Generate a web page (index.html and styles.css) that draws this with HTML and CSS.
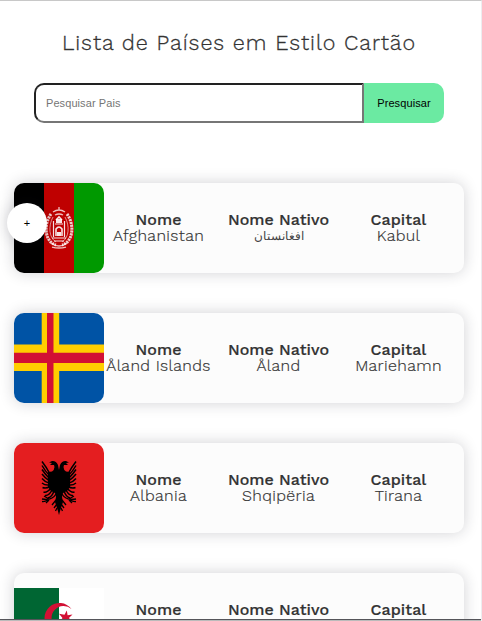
FILE: index.html
```html
<!DOCTYPE html>
<html lang="pt">
<head>
<meta charset="utf-8">
<title>Lista de Países</title>
<link rel="stylesheet" href="styles.css">
</head>
<body>
<h1 class="title">Lista de Países em Estilo Cartão</h1>
<form class="search">
  <input class="search-input" type="text" placeholder="Pesquisar Pais">
  <button class="search-button" type="button">Presquisar</button>
</form>
<main class="list">
  <article class="card">
    <svg class="flag" viewBox="0 0 90 90">
      <path d="M0 0h30v90H0z"/><path fill="#bf0000" d="M30 0h30v90H30z"/><path fill="#090" d="M60 0h30v90H60z"/>
      <g fill="none" stroke="#fff">
        <path d="M37 31C29 42 31 59 42 62M53 31C61 42 59 59 48 62" stroke-width="3" stroke-dasharray="2.200 .7" opacity=".8"/>
        <path d="M39 34C34 43 35 55 42 59M51 34C56 43 55 55 48 59" stroke-width=".8" opacity=".7"/>
        <path d="M39 29q6-4 12 0M41 32q4-2 8 0M45 24v3M37 60q8 6 16 0M38 64q7 2 14 0" stroke-width="1.300" opacity=".75"/>
        <path d="M39.500 38v16M50.500 38v16M41 41h8M38 55h14M40 58h10" stroke-width="1.200" opacity=".9"/>
        <path d="M42 53V46q3-4 6 0v7M42 37l3-3 3 3" stroke-width="1.600" opacity=".9"/>
      </g>
      <path fill="#fff" opacity=".9" d="M42 36h6v4h-6zM43 49h4v4h-4z"/>
    </svg>
    <div class="info">
      <div class="field"><strong>Nome</strong><span>Afghanistan</span></div>
      <div class="field"><strong>Nome Nativo</strong><span class="arabic" lang="fa">افغانستان</span></div>
      <div class="field"><strong>Capital</strong><span>Kabul</span></div>
    </div>
    <button class="more" type="button">+</button>
  </article>
  <article class="card">
    <svg class="flag" viewBox="0 0 90 90">
      <path fill="#0053a5" d="M0 0h90v90H0z"/>
      <path fill="#ffce00" d="M27.700 0h17.500v90H27.700zM0 31.500h90v26.500H0z"/>
      <path fill="#d21034" d="M33 0h6.500v90H33zM0 39.700h90v10.300H0z"/>
    </svg>
    <div class="info">
      <div class="field"><strong>Nome</strong><span>Åland Islands</span></div>
      <div class="field"><strong>Nome Nativo</strong><span>Åland</span></div>
      <div class="field"><strong>Capital</strong><span>Mariehamn</span></div>
    </div>
  </article>
  <article class="card">
    <svg class="flag" viewBox="0 0 90 90">
      <path fill="#e41e20" d="M0 0h90v90H0z"/>
      <g id="wing">
        <path d="M45.200 28L44 22Q42 17.500 38 18L35 19.500 38 20 36 22 40 22Q41.500 26 38 28.500L34 29V44L37 48 41 50 42 54 41 59 43 65 45.200 72z"/>
        <path fill="none" stroke="#000" stroke-width="1.500" d="M36 31Q33 25 28 18.500M36 33Q31 28 28 22.500M35 35Q31 31 28 26.500M35 37.500Q31 35 28 31M35 40Q31 39 28 35.500M35 42Q31 42.500 28 40M36 43.500Q32 46 28.500 44.500M37 45Q33 50 29.500 49M38 47Q35 53 31 52.500M40 48Q38 54 34 55"/>
        <path fill="none" stroke="#000" stroke-width="1.300" d="M42 51Q38 58 28 56M34 56.500Q31 59 28 58.500M35 56l-5-3M35 57l-3 3M42 57l-4 5M43 61l-3 4M43 65l-1.500 3"/>
      </g>
      <use href="#wing" transform="matrix(-1 0 0 1 90 0)"/>
    </svg>
    <div class="info">
      <div class="field"><strong>Nome</strong><span>Albania</span></div>
      <div class="field"><strong>Nome Nativo</strong><span>Shqipëria</span></div>
      <div class="field"><strong>Capital</strong><span>Tirana</span></div>
    </div>
  </article>
  <article class="card">
    <svg class="flag" viewBox="0 0 90 90">
      <path fill="#063" d="M0 15h45v60H0z"/><path fill="#fff" d="M45 15h45v60H45z"/>
      <path fill="#d21034" d="M57.500 36A15 15 0 1 0 57.500 54A12 12 0 1 1 57.500 36z"/>
      <path fill="#d21034" d="M52.800 37.500l.8 4.800 4.900-.7-3.600 3.400 3.600 3.400-4.900-.7-.8 4.800-2.300-4.300-5.500 1 3.500-4.200-3.500-4.200 5.500 1z"/>
    </svg>
    <div class="info">
      <div class="field"><strong>Nome</strong><span>Algeria</span></div>
      <div class="field"><strong>Nome Nativo</strong><span class="arabic" lang="ar">الجزائر</span></div>
      <div class="field"><strong>Capital</strong><span>Algiers</span></div>
    </div>
  </article>
</main>
<div class="edge"></div>
</body>
</html>
```
FILE: styles.css
```css
* { box-sizing: border-box; }
html { height: 621px; overflow: hidden; }
body {
  margin: 0;
  height: 621px;
  overflow: hidden;
  position: relative;
  background: #fff;
  border-top: 1px solid #c8c8c8;
  border-right: 1px solid #ededf0;
  color: #333;
  font-family: "Work Sans", Inter, sans-serif;
  font-weight: 300;
}
.title {
  margin: 29px 0 0;
  padding-right: 3px;
  height: 26px;
  line-height: 26px;
  font-size: 21.5px;
  font-weight: 300;
  letter-spacing: .97px;
  -webkit-text-stroke: .3px #333;
  text-align: center;
  white-space: nowrap;
}
.search {
  display: flex;
  width: 410px;
  height: 40px;
  margin: 27px 0 0 34px;
}
.search-input {
  width: 330px;
  height: 40px;
  padding: 0 10px;
  border: 2px solid;
  border-color: #222 #767676 #767676 #222;
  border-radius: 10px 0 0 10px;
  background: #fff;
  font: 11px "Liberation Sans", sans-serif;
  letter-spacing: .08px;
}
.search-input::placeholder { color: #757575; }
.search-button {
  width: 80px;
  padding: 0;
  border: 0;
  border-radius: 0 10px 10px 0;
  background: #6beaa2;
  color: #000;
  font: 11px "Liberation Sans", sans-serif;
  letter-spacing: .1px;
}
.list {
  display: flex;
  flex-direction: column;
  gap: 40px;
  width: 450px;
  margin: 60px 0 0 14px;
}
.card {
  position: relative;
  display: flex;
  align-items: center;
  height: 90px;
  flex: none;
  border-radius: 10px;
  background: #fcfcfc;
  box-shadow: 0 0 15px rgba(30, 30, 45, .2);
}
.flag { display: block; flex: none; width: 90px; height: 90px; border-radius: 10px; }
.info {
  display: grid;
  grid-template-columns: repeat(3, 120px);
  margin-left: -5.5px;
  line-height: 16px;
  text-align: center;
  white-space: nowrap;
}
.field { display: flex; flex-direction: column; align-items: center; }
.field strong { height: 16px; font-size: 16px; font-weight: 500; letter-spacing: .05px; -webkit-text-stroke: .2px #333; }
.field span { height: 16px; font-size: 16px; font-weight: 300; letter-spacing: .35px; -webkit-text-stroke: .2px #333; }
.field .arabic { color: #444; font-family: "DejaVu Sans", sans-serif; font-size: 11.5px; letter-spacing: 0; -webkit-text-stroke: 0; }
.more {
  position: absolute;
  left: -7px;
  top: 20px;
  width: 40px;
  height: 40px;
  padding: 0;
  border: 0;
  border-radius: 50%;
  background: #fff;
  color: #000;
  font: 11px "Liberation Sans", sans-serif;
  box-shadow: 0 0 15px rgba(30, 30, 45, .2);
}
.edge {
  position: absolute;
  left: 0;
  right: 0;
  bottom: 0;
  height: 2px;
  background: #bbb;
  border-top: 1px solid #55555a;
}
```
